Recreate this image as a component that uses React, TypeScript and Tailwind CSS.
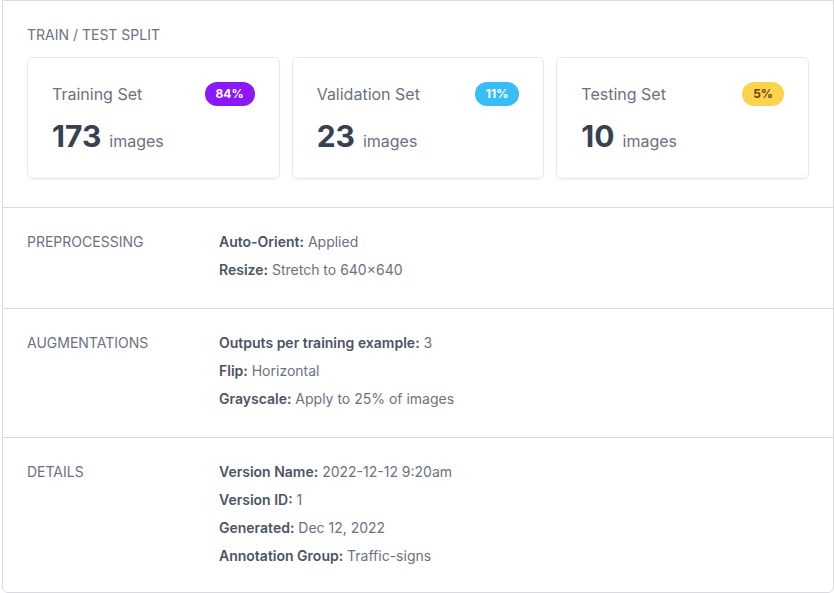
const splits = [
  { name: "Training Set", count: 173, pct: "84%", badge: "bg-[#8b18f6] text-white" },
  { name: "Validation Set", count: 23, pct: "11%", badge: "bg-[#38bdf8] text-white" },
  { name: "Testing Set", count: 10, pct: "5%", badge: "bg-[#fcd34d] text-[#713f12]" },
];

const sections: { label: string; rows: [string, string][] }[] = [
  {
    label: "Preprocessing",
    rows: [
      ["Auto-Orient:", "Applied"],
      ["Resize:", "Stretch to 640×640"],
    ],
  },
  {
    label: "Augmentations",
    rows: [
      ["Outputs per training example:", "3"],
      ["Flip:", "Horizontal"],
      ["Grayscale:", "Apply to 25% of images"],
    ],
  },
  {
    label: "Details",
    rows: [
      ["Version Name:", "2022-12-12 9:20am"],
      ["Version ID:", "1"],
      ["Generated:", "Dec 12, 2022"],
      ["Annotation Group:", "Traffic-signs"],
    ],
  },
];

const App = () => {
  return (
    <div className="ml-[2px] w-[832px] h-[593px] border border-[#d8dae0] rounded-b-md bg-white font-['Inter',sans-serif] text-[#6b7280] overflow-hidden">
      <section className="px-6 pt-6 pb-7 border-b border-[#d8dae0]">
        <h3 className="text-sm leading-5 uppercase text-[#6b7280]">Train / Test Split</h3>
        <div className="mt-3 grid grid-cols-3 gap-3">
          {splits.map((s) => (
            <div
              key={s.name}
              className="border border-[#e5e7eb] rounded-md p-6 shadow-[0_1px_2px_rgba(0,0,0,0.05)]"
            >
              <div className="flex items-center justify-between h-6">
                <span className="text-base text-[#6b7280]">{s.name}</span>
                <span
                  className={`${s.badge} rounded-full h-6 px-[11px] flex items-center text-xs font-bold`}
                >
                  {s.pct}
                </span>
              </div>
              <div className="mt-3 leading-9 flex items-baseline">
                <span className="text-[30px] font-bold text-[#374151]">{s.count}</span>
                <span className="ml-2 text-base text-[#6b7280]">images</span>
              </div>
            </div>
          ))}
        </div>
      </section>
      {sections.map((sec, i) => (
        <section
          key={sec.label}
          className={`flex px-6 pt-6 pb-7 ${i < sections.length - 1 ? "border-b border-[#d8dae0]" : ""}`}
        >
          <div className="w-48 shrink-0 text-sm leading-5 uppercase">{sec.label}</div>
          <div className="flex flex-col gap-2 text-sm leading-5">
            {sec.rows.map(([k, v]) => (
              <div key={k}>
                <span className="font-semibold text-[#4b5563]">{k}</span> {v}
              </div>
            ))}
          </div>
        </section>
      ))}
    </div>
  );
};

export default App;
